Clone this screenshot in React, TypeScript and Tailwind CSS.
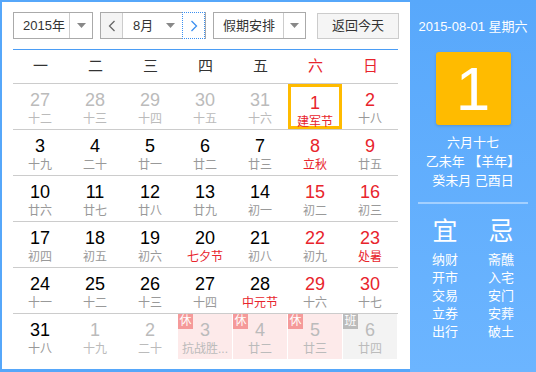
import React from 'react';

type Day = {
    n: number;
    l: string;
    muted?: boolean;
    red?: boolean;
    festival?: boolean;
    today?: boolean;
    tag?: '休' | '班';
};

const weekNames = ['一', '二', '三', '四', '五', '六', '日'];

const weeks: Day[][] = [
    [
        { n: 27, l: '十二', muted: true },
        { n: 28, l: '十三', muted: true },
        { n: 29, l: '十四', muted: true },
        { n: 30, l: '十五', muted: true },
        { n: 31, l: '十六', muted: true },
        { n: 1, l: '建军节', red: true, festival: true, today: true },
        { n: 2, l: '十八', red: true },
    ],
    [
        { n: 3, l: '十九' },
        { n: 4, l: '二十' },
        { n: 5, l: '廿一' },
        { n: 6, l: '廿二' },
        { n: 7, l: '廿三' },
        { n: 8, l: '立秋', red: true, festival: true },
        { n: 9, l: '廿五', red: true },
    ],
    [
        { n: 10, l: '廿六' },
        { n: 11, l: '廿七' },
        { n: 12, l: '廿八' },
        { n: 13, l: '廿九' },
        { n: 14, l: '初一' },
        { n: 15, l: '初二', red: true },
        { n: 16, l: '初三', red: true },
    ],
    [
        { n: 17, l: '初四' },
        { n: 18, l: '初五' },
        { n: 19, l: '初六' },
        { n: 20, l: '七夕节', festival: true },
        { n: 21, l: '初八' },
        { n: 22, l: '初九', red: true },
        { n: 23, l: '处暑', red: true, festival: true },
    ],
    [
        { n: 24, l: '十一' },
        { n: 25, l: '十二' },
        { n: 26, l: '十三' },
        { n: 27, l: '十四' },
        { n: 28, l: '中元节', festival: true },
        { n: 29, l: '十六', red: true },
        { n: 30, l: '十七', red: true },
    ],
    [
        { n: 31, l: '十八' },
        { n: 1, l: '十九', muted: true },
        { n: 2, l: '二十', muted: true },
        { n: 3, l: '抗战胜...', muted: true, tag: '休' },
        { n: 4, l: '廿二', muted: true, tag: '休' },
        { n: 5, l: '廿三', muted: true, tag: '休' },
        { n: 6, l: '廿四', muted: true, tag: '班' },
    ],
];

const yi = ['纳财', '开市', '交易', '立券', '出行'];
const ji = ['斋醮', '入宅', '安门', '安葬', '破土'];

const Caret = () => (
    <svg width="9" height="5" viewBox="0 0 9 5">
        <path d="M0 0 L9 0 L4.5 5 Z" fill="#888" />
    </svg>
);

const Chevron = ({ dir, color }: { dir: 'l' | 'r'; color: string }) => (
    <svg width="8" height="12" viewBox="0 0 8 12">
        <path
            d={dir === 'l' ? 'M6.5 1 L1.5 6 L6.5 11' : 'M1.5 1 L6.5 6 L1.5 11'}
            fill="none"
            stroke={color}
            strokeWidth="1.3"
        />
    </svg>
);

const DayCell: React.FC<{ d: Day }> = ({ d }) => {
    let numColor = 'text-black';
    let lunarColor = 'text-[#999]';
    if (d.muted) {
        numColor = 'text-[#bbb]';
        lunarColor = 'text-[#bbb]';
    } else if (d.red) {
        numColor = 'text-[#e8242c]';
    }
    if (d.festival && !d.muted) lunarColor = 'text-[#e8242c]';

    let bg = '';
    if (d.tag === '休') bg = 'bg-[#fdeaea]';
    if (d.tag === '班') bg = 'bg-[#f3f3f3]';

    return (
        <div className="relative h-full">
            <div
                className={`relative w-[54px] h-full flex flex-col items-center pt-[5px] ${bg} ${
                    d.today ? 'border-[3px] border-[#ffbb00] h-[42px] pt-[2px]' : ''
                }`}
            >
                {d.tag && (
                    <span
                        className={`absolute left-0 top-0 w-[15px] h-[15px] text-[12px] leading-[15px] text-center text-white ${
                            d.tag === '休' ? 'bg-[#f59a9a]' : 'bg-[#bbbbbb]'
                        }`}
                    >
                        {d.tag}
                    </span>
                )}
                <span className={`text-[18px] leading-[22px] ${numColor}`}>{d.n}</span>
                <span className={`text-[12px] leading-[16px] ${lunarColor}`}>{d.l}</span>
            </div>
        </div>
    );
};

export default function App() {
    return (
        <div
            className="w-[536px] h-[372px] flex bg-[#56a7fa] pl-[2px] pt-[2px] pb-[3px]"
            style={{ fontFamily: '"Liberation Sans", "Noto Sans CJK SC", sans-serif' }}
        >
            <div className="w-[408px] h-full bg-white pl-[11px] pt-[10px]">
                {/* toolbar */}
                <div className="flex items-start h-[27px] text-[13px] text-[#333]">
                    <div className="w-[80px] h-[27px] flex border border-[#aaa] bg-white">
                        <span className="flex-1 pl-[9px] leading-[25px]">2015年</span>
                        <span className="w-[23px] flex items-center justify-center border-l border-[#ccc]">
                            <Caret />
                        </span>
                    </div>
                    <div className="ml-[7px] w-[106px] h-[27px] flex border border-[#aaa]">
                        <button className="w-[22px] flex items-center justify-center bg-[#f4f4f4] border-r border-[#ccc]">
                            <Chevron dir="l" color="#666" />
                        </button>
                        <div className="w-[59px] flex items-center bg-white">
                            <span className="flex-1 pl-[10px] leading-[25px]">8月</span>
                            <span className="pr-[7px] flex items-center">
                                <Caret />
                            </span>
                        </div>
                        <button className="w-[23px] -my-px -mr-px flex items-center justify-center bg-white border border-dotted border-[#3b8ff0]">
                            <Chevron dir="r" color="#3b8ff0" />
                        </button>
                    </div>
                    <div className="ml-[7px] w-[93px] h-[27px] flex border border-[#aaa] bg-white">
                        <span className="flex-1 pl-[9px] leading-[25px]">假期安排</span>
                        <span className="w-[22px] flex items-center justify-center border-l border-[#ccc]">
                            <Caret />
                        </span>
                    </div>
                    <button className="ml-[11px] mt-px w-[82px] h-[26px] border border-[#ccc] bg-[#f5f5f5] text-[13px] text-[#333] leading-[24px]">
                        返回今天
                    </button>
                </div>

                {/* calendar */}
                <div className="mt-[10px] w-[385px] border-t border-[#4b9df5]">
                    <div className="grid grid-cols-7 h-[34px] border-b border-[#ccc] text-[15px] text-[#333]">
                        {weekNames.map((w, i) => (
                            <div
                                key={w}
                                className={`flex items-center justify-center ${i >= 5 ? 'text-[#e8242c]' : ''}`}
                            >
                                {w}
                            </div>
                        ))}
                    </div>
                    {weeks.map((week, wi) => (
                        <div
                            key={wi}
                            className={`grid grid-cols-7 h-[46px] ${
                                wi < weeks.length - 1 ? 'border-b border-[#ccc]' : ''
                            }`}
                        >
                            {week.map((d, di) => (
                                <div key={di} className={wi < weeks.length - 1 ? 'h-[45px]' : 'h-[45px]'}>
                                    <DayCell d={d} />
                                </div>
                            ))}
                        </div>
                    ))}
                </div>
            </div>

            {/* side panel */}
            <div className="flex-1 -mt-[2px] -mb-[3px] bg-gradient-to-b from-[#58a8fb] to-[#6cb5ff] text-white flex flex-col items-center">
                <div className="mt-[18px] text-[13px] leading-[18px]">2015-08-01 星期六</div>
                <div className="mt-[16px] w-[75px] h-[73px] rounded-[3px] bg-[#ffbb00] flex items-center justify-center text-[62px] leading-none shadow-[0_1px_3px_rgba(0,0,0,0.15)]">
                    1
                </div>
                <div className="mt-[8px] text-[13px] leading-[19px] text-center">
                    <div>六月十七</div>
                    <div>乙未年 【羊年】</div>
                    <div>癸未月 己酉日</div>
                </div>
                <div className="mt-[12px] w-[110px] h-[2px] bg-[#a3d0ff]" />
                <div className="mt-[12px] flex gap-[28px]">
                    <div className="flex flex-col items-center w-[28px]">
                        <span className="text-[25px] leading-[30px]">宜</span>
                        <div className="mt-[5px] flex flex-col items-center text-[13px] leading-[18px]">
                            {yi.map((t) => (
                                <span key={t}>{t}</span>
                            ))}
                        </div>
                    </div>
                    <div className="flex flex-col items-center w-[28px]">
                        <span className="text-[25px] leading-[30px]">忌</span>
                        <div className="mt-[5px] flex flex-col items-center text-[13px] leading-[18px]">
                            {ji.map((t) => (
                                <span key={t}>{t}</span>
                            ))}
                        </div>
                    </div>
                </div>
            </div>
        </div>
    );
}
